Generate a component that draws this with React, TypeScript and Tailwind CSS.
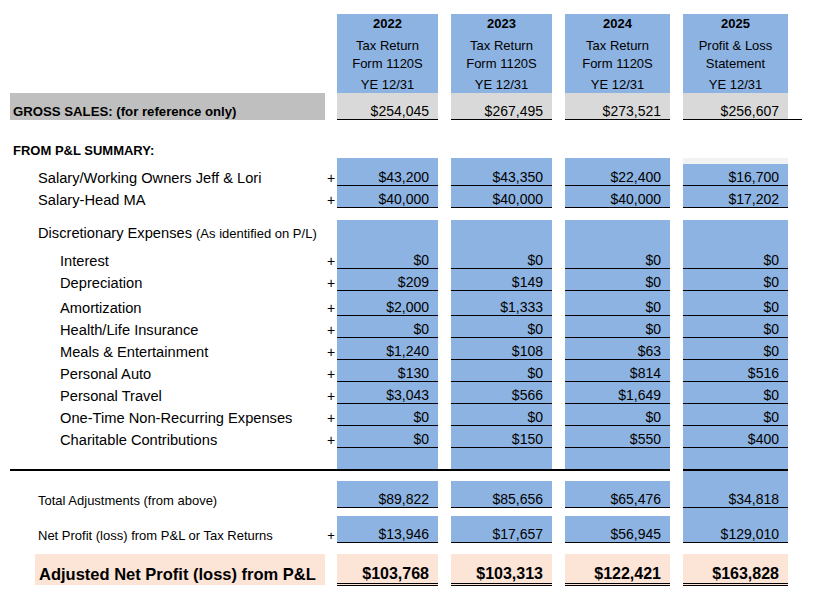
import React from 'react';

const WIDTHS = ['w-[101px]', 'w-[101px]', 'w-[105px]', 'w-[105px]'];
const BLUE = 'bg-[#8db3e2]';

type Cell = { cls: string; content?: React.ReactNode };

function Line({
  h,
  label,
  labelCls = '',
  plus,
  plusSmall = false,
  plusCls = '',
  cells,
  gaps = ['', '', ''],
  trailing,
}: {
  h: string;
  label?: React.ReactNode;
  labelCls?: string;
  plus?: boolean;
  plusSmall?: boolean;
  plusCls?: string;
  cells: Cell[];
  gaps?: string[];
  trailing?: React.ReactNode;
}) {
  return (
    <div className={`flex ${h}`}>
      <div className={`ml-[10px] w-[315px] shrink-0 ${labelCls}`}>{label}</div>
      <div className={`w-[12px] shrink-0 flex items-end justify-center ${plusCls}`}>
        {plus ? (
          <span className={plusSmall ? 'text-[13px] leading-[15px]' : 'text-[14px] leading-[15px]'}>+</span>
        ) : null}
      </div>
      {cells.map((c, i) => (
        <React.Fragment key={i}>
          {i > 0 && <div className={`w-[13px] shrink-0 ${gaps[i - 1]}`} />}
          <div className={`${WIDTHS[i]} shrink-0 ${c.cls}`}>{c.content}</div>
        </React.Fragment>
      ))}
      {trailing}
    </div>
  );
}

function Val({ v, cls = 'text-[14px] leading-[15px]' }: { v: string; cls?: string }) {
  return <span className={cls}>{v}</span>;
}

function DataRow({
  h,
  label,
  indent,
  vals,
  c4top = false,
  small = false,
  plus = true,
}: {
  h: string;
  label: React.ReactNode;
  indent: string;
  vals: string[];
  c4top?: boolean;
  small?: boolean;
  plus?: boolean;
}) {
  return (
    <Line
      h={h}
      plus={plus}
      plusSmall={small}
      label={
        <div className={`h-full flex items-end ${indent}`}>
          <span className={small ? 'text-[13px] leading-[15px]' : 'text-[14.67px] leading-[15px]'}>{label}</span>
        </div>
      }
      cells={vals.map((v, i) => ({
        cls: `${
          c4top && i === 3 ? 'bg-[linear-gradient(to_bottom,#f2f2f2_6px,#8db3e2_6px)]' : BLUE
        } border-b border-black h-full flex items-end justify-end pr-[9px]`,
        content: <Val v={v} />,
      }))}
    />
  );
}

function Header({ year, l1, l2 }: { year: string; l1: string; l2: string }) {
  return (
    <div className="flex flex-col items-center pt-[1px] text-[13px]">
      <div className="h-[18px] leading-[18px] font-bold">{year}</div>
      <div className="h-[4px]" />
      <div className="h-[18px] leading-[18px]">{l1}</div>
      <div className="h-[18px] leading-[18px]">{l2}</div>
      <div className="h-[3px]" />
      <div className="h-[17px] leading-[17px]">YE 12/31</div>
    </div>
  );
}

export default function App() {
  const blueEmpty = { cls: `${BLUE} h-full` };
  const whiteEmpty = { cls: 'h-full' };
  return (
    <div className="w-[817px] h-[602px] bg-white text-black font-['Liberation_Sans',Arial,sans-serif] overflow-hidden">
      <div className="h-[14px]" />
      {/* Header */}
      <Line
        h="h-[79px]"
        cells={[
          { cls: `${BLUE} h-full`, content: <Header year="2022" l1="Tax Return" l2="Form 1120S" /> },
          { cls: `${BLUE} h-full`, content: <Header year="2023" l1="Tax Return" l2="Form 1120S" /> },
          { cls: `${BLUE} h-full`, content: <Header year="2024" l1="Tax Return" l2="Form 1120S" /> },
          { cls: `${BLUE} h-full`, content: <Header year="2025" l1="Profit & Loss" l2="Statement" /> },
        ]}
      />
      {/* Gross sales */}
      <Line
        h="h-[27px]"
        labelCls="bg-[#bfbfbf]"
        label={
          <div className="h-full flex items-end pl-[3px] pb-[1px]">
            <span className="text-[13.2px] leading-[15px] font-bold">GROSS SALES: (for reference only)</span>
          </div>
        }
        cells={['$254,045', '$267,495', '$273,521', '$256,607'].map((v) => ({
          cls: 'bg-[#d9d9d9] border-b border-black h-full flex items-end justify-end pr-[9px]',
          content: <Val v={v} />,
        }))}
        trailing={<div className="w-[14px] h-full border-b border-black" />}
      />
      {/* FROM P&L */}
      <Line
        h="h-[38px]"
        label={
          <div className="h-full flex items-end pl-[3px]">
            <span className="text-[13px] leading-[15px] font-bold">FROM P&amp;L SUMMARY:</span>
          </div>
        }
        cells={[whiteEmpty, whiteEmpty, whiteEmpty, whiteEmpty]}
      />
      <DataRow
        h="h-[28px]"
        indent="pl-[28px]"
        label="Salary/Working Owners Jeff & Lori"
        vals={['$43,200', '$43,350', '$22,400', '$16,700']}
        c4top
      />
      <DataRow h="h-[22px]" indent="pl-[28px]" label="Salary-Head MA" vals={['$40,000', '$40,000', '$40,000', '$17,202']} />
      <div className="h-[12px]" />
      {/* Discretionary header */}
      <Line
        h="h-[27px]"
        label={
          <div className="h-full pl-[28px] pt-[1px]">
            <span className="text-[14.67px] leading-[15px]">Discretionary Expenses </span>
            <span className="text-[13px] leading-[15px]">(As identified on P/L)</span>
          </div>
        }
        cells={[blueEmpty, blueEmpty, blueEmpty, blueEmpty]}
      />
      <DataRow h="h-[22px]" indent="pl-[50px]" label="Interest" vals={['$0', '$0', '$0', '$0']} />
      <DataRow h="h-[22px]" indent="pl-[50px]" label="Depreciation" vals={['$209', '$149', '$0', '$0']} />
      <DataRow h="h-[25px]" indent="pl-[50px]" label="Amortization" vals={['$2,000', '$1,333', '$0', '$0']} />
      <DataRow h="h-[22px]" indent="pl-[50px]" label="Health/Life Insurance" vals={['$0', '$0', '$0', '$0']} />
      <DataRow h="h-[22px]" indent="pl-[50px]" label="Meals & Entertainment" vals={['$1,240', '$108', '$63', '$0']} />
      <DataRow h="h-[22px]" indent="pl-[50px]" label="Personal Auto" vals={['$130', '$0', '$814', '$516']} />
      <DataRow h="h-[22px]" indent="pl-[50px]" label="Personal Travel" vals={['$3,043', '$566', '$1,649', '$0']} />
      <DataRow h="h-[22px]" indent="pl-[50px]" label="One-Time Non-Recurring Expenses" vals={['$0', '$0', '$0', '$0']} />
      <DataRow h="h-[22px]" indent="pl-[50px]" label="Charitable Contributions" vals={['$0', '$150', '$550', '$400']} />
      {/* Blank blue with thick rule */}
      <Line
        h="h-[23px]"
        labelCls="border-b-2 border-black"
        plusCls="border-b-2 border-black"
        gaps={['border-b-2 border-black h-full', 'border-b-2 border-black h-full', '']}
        cells={[0, 1, 2, 3].map(() => ({ cls: `${BLUE} h-full border-b-2 border-black` }))}
      />
      <Line h="h-[10px]" cells={[whiteEmpty, whiteEmpty, whiteEmpty, blueEmpty]} />
      <DataRow
        h="h-[27px]"
        indent="pl-[28px]"
        label="Total Adjustments (from above)"
        vals={['$89,822', '$85,656', '$65,476', '$34,818']}
        small
        plus={false}
      />
      <Line h="h-[8px]" cells={[whiteEmpty, whiteEmpty, whiteEmpty, blueEmpty]} />
      <DataRow
        h="h-[27px]"
        indent="pl-[28px]"
        label="Net Profit (loss) from P&L or Tax Returns"
        vals={['$13,946', '$17,657', '$56,945', '$129,010']}
        small
      />
      <div className="h-[11px]" />
      {/* Adjusted */}
      <Line
        h="h-[32px]"
        label={
          <div className="ml-[25px] h-[31px] bg-[#fce4d6] flex items-end pl-[4px] pb-[2px]">
            <span className="text-[16.5px] leading-[18px] font-bold">Adjusted Net Profit (loss) from P&amp;L</span>
          </div>
        }
        cells={['$103,768', '$103,313', '$122,421', '$163,828'].map((v) => ({
          cls: 'bg-[#fce4d6] border-b-[3px] border-double border-black h-full flex items-end justify-end pr-[9px]',
          content: <Val v={v} cls="text-[16px] leading-[18px] font-bold" />,
        }))}
      />
    </div>
  );
}
